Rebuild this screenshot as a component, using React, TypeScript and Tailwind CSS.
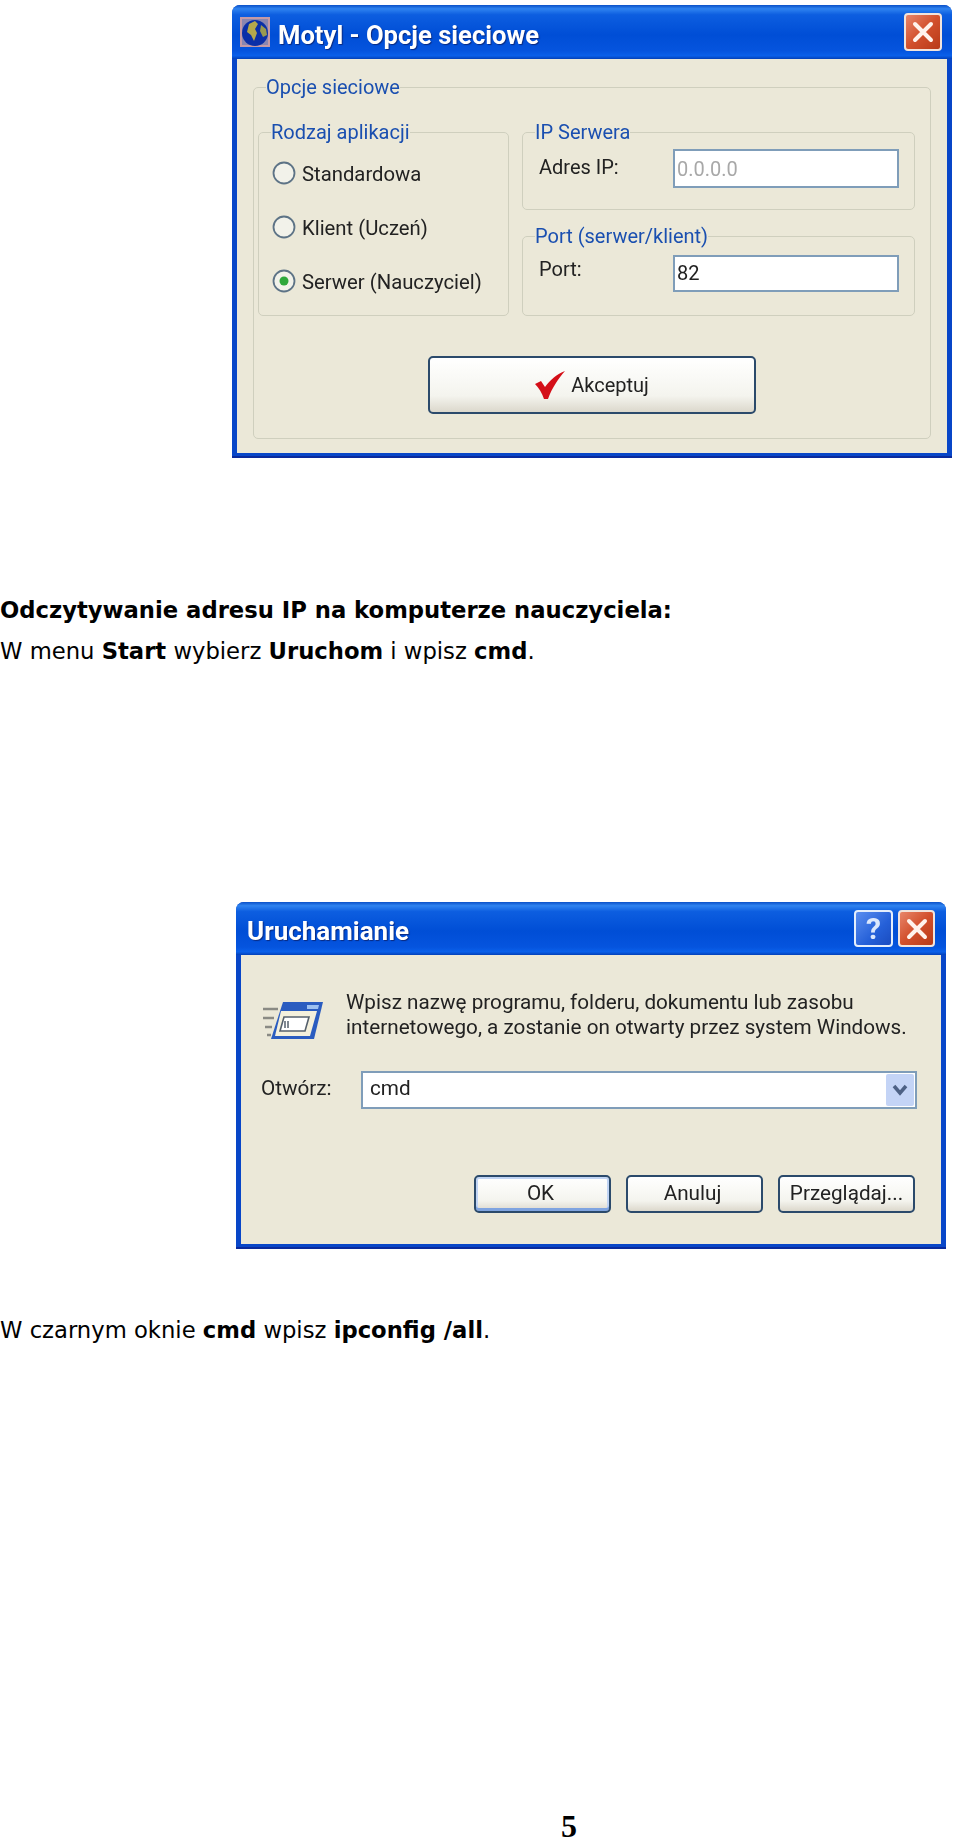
import type { ReactNode } from "react";

const dialogFont = "font-['Roboto',sans-serif] blur-[0.45px]";
const titleBar =
  "bg-[linear-gradient(180deg,#0a50c8_0%,#2f83f0_7%,#0d5ee0_18%,#004ed6_55%,#0554de_85%,#0a60ea_94%,#0340b8_100%)]";
const xpButton =
  "border-2 border-[#2b4a6b] rounded-[5px] bg-[linear-gradient(180deg,#ffffff_0%,#f4f4ee_70%,#dcd8cc_100%)]";

function GlobeIcon() {
  return (
    <svg width="30" height="30" viewBox="0 0 30 30" className="shrink-0">
      <rect width="30" height="30" fill="#c49aa6" />
      <rect x="2" y="2" width="26" height="26" fill="#8a86b0" />
      <circle cx="15" cy="16" r="13" fill="#0a2fa8" />
      <path d="M9 7l6-3 3 3-3 5 2 4-3 8-3-6-4-3z" fill="#b4a74c" />
      <path d="M21 8l5 4 1 6-4 2-3-6z" fill="#9a9a50" />
    </svg>
  );
}

function CloseButton({ className }: { className: string }) {
  return (
    <div className={`flex items-center justify-center rounded-[4px] border-2 border-[#f2e4dc] bg-[linear-gradient(135deg,#e8856a_0%,#d2502c_50%,#b83a18_100%)] ${className}`}>
      <svg width="22" height="22" viewBox="0 0 22 22">
        <path d="M3 3l16 16M19 3L3 19" stroke="#fff3ec" strokeWidth="4" strokeLinecap="round" />
      </svg>
    </div>
  );
}

function RadioDot({ checked }: { checked?: boolean }) {
  return (
    <svg width="24" height="24" viewBox="0 0 24 24" className="ml-px shrink-0">
      <circle cx="12" cy="12" r="10.5" fill="#f2f2ea" stroke="#5d7386" strokeWidth="1.8" />
      {checked && <circle cx="12" cy="12" r="4.5" fill="#2fa83c" />}
    </svg>
  );
}

function CheckIcon() {
  return (
    <svg width="30" height="28" viewBox="0 0 30 28" className="shrink-0">
      <path d="M0 13l6-3 4 6C15 9 22 3 30 0 23 8 17 17 13 28H9C7 22 4 17 0 13z" fill="#d40f18" />
    </svg>
  );
}

function RunIcon() {
  return (
    <svg width="62" height="40" viewBox="0 0 62 40" className="mt-[11px] shrink-0">
      <path d="M2 8h15M2 17h11M4 26h7M6 34h4" stroke="#8a8a84" strokeWidth="2.5" />
      <path d="M22 1h40l-9 37H10z" fill="#2a5cc0" />
      <path d="M46 4h12l-1 4H46z" fill="#9cc0f0" />
      <path d="M20 10h36l-7 25H14z" fill="#f4f0dc" />
      <path d="M23 16h25l-4 14H19z" fill="#ffffff" stroke="#55606c" strokeWidth="1.6" />
      <path d="M24 20v7M27 20v7" stroke="#55606c" strokeWidth="1.5" />
    </svg>
  );
}

function GroupBox({ label, className, children }: { label: string; className: string; children: ReactNode }) {
  return (
    <fieldset className={`rounded-[5px] border border-[#cfcfbe] ${className}`}>
      <legend className="ml-[12px] h-6 text-[20px] leading-6 text-[#1a4fb0]">{label}</legend>
      {children}
    </fieldset>
  );
}

function RadioRow({ label, checked }: { label: string; checked?: boolean }) {
  return (
    <div className="flex h-6 items-center gap-[6px] text-[20.3px] text-[#222]">
      <RadioDot checked={checked} />
      <span className="pt-[2px]">{label}</span>
    </div>
  );
}

function OptionsDialog() {
  return (
    <div className={`ml-[232px] w-[720px] h-[453px] rounded-t-[8px] border-b-2 border-[#0a2a9c] bg-[#0846c8] flex flex-col ${dialogFont}`}>
      <div className={`h-[54px] rounded-t-[8px] flex items-center pl-2 pr-[10px] ${titleBar}`}>
        <GlobeIcon />
        <span className="ml-2 pt-[6px] text-[25.6px] font-bold text-white [text-shadow:1px_1px_1px_#0a2a80]">Motyl - Opcje sieciowe</span>
        <CloseButton className="ml-auto w-[38px] h-[38px]" />
      </div>
      <div className="flex-1 mx-[5px] mb-[3px] bg-[#ebe8d8] px-[16px] pt-[16px]">
        <GroupBox label="Opcje sieciowe" className="h-[364px]">
          <div className="mt-[21px] pl-[4px] pr-[15px] flex gap-[13px]">
            <GroupBox label="Rodzaj aplikacji" className="w-[251px] h-[196px]">
              <div className="mt-[17px] pl-[12px] flex flex-col gap-[30px]">
                <RadioRow label="Standardowa" />
                <RadioRow label="Klient (Uczeń)" />
                <RadioRow label="Serwer (Nauczyciel)" checked />
              </div>
            </GroupBox>
            <div className="flex-1 flex flex-col gap-[14px]">
              <GroupBox label="IP Serwera" className="h-[90px]">
                <div className="mt-[5px] pl-[16px] flex items-center text-[20px] text-[#222]">
                  <span className="w-[134px] pb-1">Adres IP:</span>
                  <div className="w-[226px] h-[39px] border-2 border-[#7f9db9] bg-white pl-[2px] leading-[36px] text-[#a8a8a8]">0.0.0.0</div>
                </div>
              </GroupBox>
              <GroupBox label="Port (serwer/klient)" className="h-[92px]">
                <div className="mt-[6px] pl-[16px] flex items-center text-[20px] text-[#222]">
                  <span className="w-[134px] pb-2">Port:</span>
                  <div className="w-[226px] h-[37px] border-2 border-[#7f9db9] bg-white pl-[2px] leading-[33px]">82</div>
                </div>
              </GroupBox>
            </div>
          </div>
          <div className={`mt-[40px] mx-auto w-[328px] h-[58px] flex items-center justify-center gap-[6px] text-[20px] text-[#222] ${xpButton}`}>
            <CheckIcon />
            <span>Akceptuj</span>
          </div>
        </GroupBox>
      </div>
    </div>
  );
}

function RunDialog() {
  return (
    <div className={`ml-[236px] mt-[230px] w-[710px] h-[347px] rounded-t-[8px] border-b-2 border-[#0a2a9c] bg-[#0846c8] flex flex-col ${dialogFont}`}>
      <div className={`h-[53px] rounded-t-[8px] flex items-center pl-[11px] pr-[11px] ${titleBar}`}>
        <span className="pt-[6px] text-[26px] font-bold text-white [text-shadow:1px_1px_1px_#0a2a80]">Uruchamianie</span>
        <div className="ml-auto w-[39px] h-[37px] flex items-center justify-center rounded-[4px] border-2 border-[#e4eefc] bg-[linear-gradient(135deg,#5a8ef0_0%,#2560d8_60%,#1a4cc0_100%)] text-[30px] font-bold leading-none text-[#dce8fc]">?</div>
        <CloseButton className="ml-[5px] w-[37px] h-[37px]" />
      </div>
      <div className="flex-1 mx-[5px] mb-[3px] bg-[#ebe8d8] pt-[35px] text-[20.7px] text-[#222]">
        <div className="pl-[20px] flex gap-[23px]">
          <RunIcon />
          <p className="leading-[25px]">
            Wpisz nazwę programu, folderu, dokumentu lub zasobu
            <br />
            internetowego, a zostanie on otwarty przez system Windows.
          </p>
        </div>
        <div className="mt-[30px] pl-[20px] flex items-center">
          <span className="w-[100px] pb-[3px]">Otwórz:</span>
          <div className="w-[556px] h-[38px] border-2 border-[#7f9db9] bg-white pl-[7px] pr-px flex items-center">
            <span className="pb-[3px]">cmd</span>
            <div className="ml-auto w-[28px] h-[32px] rounded-[2px] bg-[#c4d4f6] flex items-center justify-center">
              <svg width="16" height="12" viewBox="0 0 16 12">
                <path d="M2 2l6 7 6-7" fill="none" stroke="#4d6185" strokeWidth="3.5" />
              </svg>
            </div>
          </div>
        </div>
        <div className="mt-[66px] pr-[26px] flex justify-end gap-[15px]">
          <div className={`w-[137px] h-[38px] flex items-center justify-center pr-[4px] shadow-[inset_0_-3px_0_#7fa4e0,inset_0_0_0_2px_#c0d4f4] ${xpButton}`}>OK</div>
          <div className={`w-[137px] h-[38px] flex items-center justify-center pr-[4px] ${xpButton}`}>Anuluj</div>
          <div className={`w-[137px] h-[38px] flex items-center justify-center whitespace-nowrap ${xpButton}`}>Przeglądaj...</div>
        </div>
      </div>
    </div>
  );
}

export default function App() {
  return (
    <div className="w-[960px] min-h-[1842px] bg-white pt-[5px] font-['DejaVu_Sans',sans-serif] text-[22.7px] text-black">
      <OptionsDialog />

      <h2 className="mt-[132px] font-bold leading-[41px]">Odczytywanie adresu IP na komputerze nauczyciela:</h2>
      <p className="leading-[41px]">
        W menu <b>Start</b> wybierz <b>Uruchom</b> i wpisz <b>cmd</b>.
      </p>

      <RunDialog />

      <p className="mt-[61px] leading-[41px]">
        W czarnym oknie <b>cmd</b> wpisz <b>ipconfig /all</b>.
      </p>

      <div className="mt-[460px] pl-[561px] font-['Liberation_Serif',serif] text-[32px] font-bold leading-[30px]">5</div>
    </div>
  );
}
